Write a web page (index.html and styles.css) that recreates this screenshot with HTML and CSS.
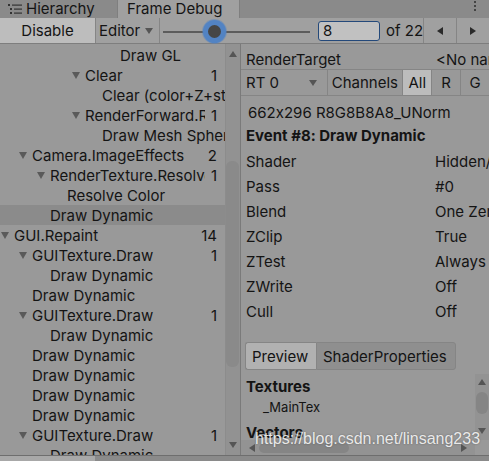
FILE: index.html
```html
<!DOCTYPE html>
<html>
<head>
<meta charset="utf-8">
<link rel="stylesheet" href="styles.css">
</head>
<body>
<div class="win">
  <div class="tabs">
    <div class="tab">
      <svg class="hicon" width="14" height="12" viewBox="0 0 14 12">
        <rect x="0" y="1" width="2" height="2" fill="#333"/>
        <rect x="4" y="1.5" width="10" height="1.2" fill="#333"/>
        <rect x="2" y="5" width="2" height="2" fill="#333"/>
        <rect x="6" y="5.5" width="8" height="1.2" fill="#333"/>
        <rect x="2" y="9" width="2" height="2" fill="#333"/>
        <rect x="6" y="9.5" width="8" height="1.2" fill="#333"/>
      </svg>
      <span>Hierarchy</span>
    </div>
    <div class="tab active">Frame Debug</div>
    <div class="tabfill"><span class="kebab"><i></i><i></i><i></i></span></div>
  </div>
  <div class="toolbar">
    <div class="tbtn disable">Disable</div>
    <div class="tbtn editor">Editor <span class="caret"></span></div>
    <div class="slider"><div class="track"></div><div class="knob"></div></div>
    <div class="field">8</div>
    <div class="of">of 22</div>
    <div class="arrow"><span class="tri-l"></span></div>
    <div class="arrow"><span class="tri-r"></span></div>
  </div>
  <div class="main">
    <div class="left">
      <div class="tree">
        <div class="row d6"><span class="sp"></span><span class="name">Draw GL</span></div>
        <div class="row d4"><span class="sp"><i class="tri"></i></span><span class="name">Clear</span><span class="cnt">1</span></div>
        <div class="row d5"><span class="sp"></span><span class="name">Clear (color+Z+stencil)</span></div>
        <div class="row d4"><span class="sp"><i class="tri"></i></span><span class="name">RenderForward.RenderLoopJob</span><span class="cnt">1</span></div>
        <div class="row d5"><span class="sp"></span><span class="name">Draw Mesh Sphere</span></div>
        <div class="row d1"><span class="sp"><i class="tri"></i></span><span class="name">Camera.ImageEffects</span><span class="cnt">2</span></div>
        <div class="row d2"><span class="sp"><i class="tri"></i></span><span class="name">RenderTexture.ResolveAA</span><span class="cnt">1</span></div>
        <div class="row d3"><span class="sp"></span><span class="name">Resolve Color</span></div>
        <div class="row d2 sel"><span class="sp"></span><span class="name">Draw Dynamic</span></div>
        <div class="row d0"><span class="sp"><i class="tri"></i></span><span class="name">GUI.Repaint</span><span class="cnt">14</span></div>
        <div class="row d1"><span class="sp"><i class="tri"></i></span><span class="name">GUITexture.Draw</span><span class="cnt">1</span></div>
        <div class="row d2"><span class="sp"></span><span class="name">Draw Dynamic</span></div>
        <div class="row d1"><span class="sp"></span><span class="name">Draw Dynamic</span></div>
        <div class="row d1"><span class="sp"><i class="tri"></i></span><span class="name">GUITexture.Draw</span><span class="cnt">1</span></div>
        <div class="row d2"><span class="sp"></span><span class="name">Draw Dynamic</span></div>
        <div class="row d1"><span class="sp"></span><span class="name">Draw Dynamic</span></div>
        <div class="row d1"><span class="sp"></span><span class="name">Draw Dynamic</span></div>
        <div class="row d1"><span class="sp"></span><span class="name">Draw Dynamic</span></div>
        <div class="row d1"><span class="sp"></span><span class="name">Draw Dynamic</span></div>
        <div class="row d1"><span class="sp"><i class="tri"></i></span><span class="name">GUITexture.Draw</span><span class="cnt">1</span></div>
        <div class="row d2"><span class="sp"></span><span class="name">Draw Dynamic</span></div>
      </div>
      <div class="vscroll">
        <span class="up"></span>
        <div class="vtrack"><div class="vthumb"></div></div>
        <span class="down"></span>
      </div>
    </div>
    <div class="right">
      <div class="rt-row"><span>RenderTarget</span><span class="rt-val">&lt;No name&gt;</span></div>
      <div class="chan-row">
        <div class="rtdrop">RT 0 <span class="caret"></span></div>
        <div class="chan">Channels</div>
        <div class="cbtn on">All</div>
        <div class="cbtn">R</div>
        <div class="cbtn">G</div>
      </div>
      <div class="fmt">662x296 R8G8B8A8_UNorm</div>
      <div class="event">Event #8: Draw Dynamic</div>
      <div class="props">
        <div class="prop"><span class="pk">Shader</span><span class="pv">Hidden/Internal-GUITexture</span></div>
        <div class="prop"><span class="pk">Pass</span><span class="pv">#0</span></div>
        <div class="prop"><span class="pk">Blend</span><span class="pv">One Zero</span></div>
        <div class="prop"><span class="pk">ZClip</span><span class="pv">True</span></div>
        <div class="prop"><span class="pk">ZTest</span><span class="pv">Always</span></div>
        <div class="prop"><span class="pk">ZWrite</span><span class="pv">Off</span></div>
        <div class="prop"><span class="pk">Cull</span><span class="pv">Off</span></div>
      </div>
      <div class="ptabs">
        <div class="ptab on">Preview</div>
        <div class="ptab">ShaderProperties</div>
      </div>
      <div class="sp-area">
        <div class="sp-content">
          <div class="sec">Textures</div>
          <div class="item">_MainTex</div>
          <div class="sec">Vectors</div>
        </div>
        <div class="rscroll">
          <span class="up"></span>
          <div class="rtrack"><div class="rthumb"></div></div>
          <span class="down"></span>
        </div>
      </div>
      <div class="hscroll">
        <span class="left-a"></span>
        <div class="htrack"><div class="hthumb"></div></div>
        <span class="right-a"></span>
        <span class="corner"></span>
      </div>
      <div class="watermark">https://blog.csdn.net/linsang233</div>
    </div>
  </div>
  <div class="bottom"><div class="bl"></div></div>
</div>
</body>
</html>
```

FILE: styles.css
```css
* { box-sizing: border-box; }
html, body { margin: 0; padding: 0; }
body {
  width: 489px;
  height: 461px;
  overflow: hidden;
  background: #999999;
  font-family: Inter, "Noto Sans", sans-serif;
  font-size: 15px;
  font-feature-settings: "calt" 0;
  color: #141414;
}
.win { width: 489px; height: 461px; display: flex; flex-direction: column; overflow: hidden; }

/* tabs */
.tabs { height: 18px; display: flex; background: #8a8a8a; flex: none; }
.tab { display: flex; align-items: center; gap: 4px; padding: 0 0 0 8px; width: 117px; height: 18px; line-height: 18px; white-space: nowrap; }
.tab.active { background: #a0a0a0; width: 123px; padding-left: 9px; border-left: 1px solid #7f7f7f; border-right: 1px solid #7f7f7f; }
.hicon { flex: none; }
.tabfill { flex: 1; position: relative; }
.kebab { position: absolute; right: 13px; top: 1px; display: flex; flex-direction: column; gap: 2px; }
.kebab i { display: block; width: 2px; height: 2px; background: #444; }

/* toolbar */
.toolbar { height: 26px; display: flex; align-items: stretch; background: #a0a0a0; border-bottom: 1px solid #7e7e7e; flex: none; white-space: nowrap; }
.tbtn { display: flex; align-items: center; border-right: 1px solid #858585; }
.disable { width: 96px; justify-content: center; background: #bdbdbd; }
.editor { width: 64px; padding-left: 3px; gap: 5px; }
.caret { display: inline-block; width: 0; height: 0; border-left: 4.5px solid transparent; border-right: 4.5px solid transparent; border-top: 6px solid #555; }
.slider { width: 150px; position: relative; }
.track { position: absolute; left: 3px; right: 0; top: 13px; height: 2px; background: #5c5c5c; }
.knob { position: absolute; left: 43px; top: 2px; width: 23px; height: 23px; border-radius: 50%; background: #464646; border: 5px solid #5283c3; box-shadow: 0 0 0 1px rgba(82,131,195,0.45); }
.field { margin: 3px 0 3px 8px; width: 62px; height: 20px; border: 1px solid #24497a; border-radius: 3px; background: #c1c1c1; padding-left: 4px; line-height: 18px; }
.of { width: 44px; display: flex; align-items: center; padding-left: 6px; border-right: 1px solid #858585; }
.arrow { width: 33px; display: flex; align-items: center; justify-content: center; border-right: 1px solid #858585; }
.arrow:last-child { border-right: none; width: 32px; }
.tri-l { width: 0; height: 0; border-top: 4.5px solid transparent; border-bottom: 4.5px solid transparent; border-right: 6px solid #2a2a2a; }
.tri-r { width: 0; height: 0; border-top: 4.5px solid transparent; border-bottom: 4.5px solid transparent; border-left: 6px solid #2a2a2a; }

/* main */
.main { flex: 1; display: flex; min-height: 0; }
.left { width: 241px; display: flex; border-right: 1px solid #7a7a7a; flex: none; }
.tree { width: 225px; overflow: hidden; padding-top: 1px; }
.row { height: 20px; display: flex; align-items: center; white-space: nowrap; }
.row.sel { background: #8b8b8b; }
.sp { width: 14px; flex: none; display: flex; align-items: center; }
.tri { display: block; margin-left: 1px; width: 0; height: 0; border-left: 4.5px solid transparent; border-right: 4.5px solid transparent; border-top: 7px solid #5a5a5a; }
.name { flex: 1; overflow: hidden; min-width: 0; }
.cnt { width: 12px; flex: none; text-align: right; margin-right: 8px; direction: rtl; overflow: visible; }
.d0 { padding-left: 0; }
.d1 { padding-left: 18px; }
.d2 { padding-left: 36px; }
.d3 { padding-left: 53px; }
.d4 { padding-left: 71px; }
.d5 { padding-left: 88px; }
.d6 { padding-left: 106px; }

.vscroll { width: 15px; background: #929292; display: flex; flex-direction: column; align-items: center; border-left: 1px solid #8c8c8c; }
.up { flex: none; margin-top: 7px; width: 0; height: 0; border-left: 4.5px solid transparent; border-right: 4.5px solid transparent; border-bottom: 6px solid #555; }
.down { flex: none; margin-bottom: 7px; width: 0; height: 0; border-left: 4.5px solid transparent; border-right: 4.5px solid transparent; border-top: 6px solid #555; }
.vtrack { flex: 1; width: 100%; padding: 104px 1px 0 0; }
.vthumb { height: 206px; background: #8a8a8a; border-radius: 6px; }

/* right */
.right { flex: 1; position: relative; display: flex; flex-direction: column; min-width: 0; overflow: hidden; }
.rt-row { height: 26px; padding: 6px 0 0 5px; display: flex; border-bottom: 1px solid #858585; white-space: nowrap; }
.rt-val { margin-left: auto; width: 53px; overflow: hidden; }
.chan-row { height: 26px; display: flex; border-bottom: 1px solid #858585; white-space: nowrap; }
.rtdrop { width: 87px; display: flex; align-items: center; justify-content: space-between; padding: 0 10px 0 5px; border-right: 1px solid #858585; }
.chan { width: 75px; display: flex; align-items: center; padding-left: 4px; }
.cbtn { width: 29px; display: flex; align-items: center; justify-content: center; border-left: 1px solid #858585; }
.cbtn.on { background: #bcbcbc; }
.fmt { padding: 7px 0 0 7px; height: 30px; line-height: 20px; white-space: nowrap; }
.event { padding-left: 5px; font-weight: 700; height: 23px; line-height: 20px; white-space: nowrap; }
.props { display: flex; flex-direction: column; }
.prop { height: 25px; display: flex; align-items: center; padding-left: 5px; white-space: nowrap; }
.pk { width: 189px; flex: none; }
.pv { overflow: hidden; }
.ptabs { display: flex; margin: 18px 0 0 4px; height: 28px; flex: none; }
.ptab { display: flex; align-items: center; padding: 0 6px; border: 1px solid #858585; background: #8f8f8f; border-radius: 0 3px 3px 0; }
.ptab.on { background: #b1b1b1; border-radius: 3px 0 0 3px; border-right: none; width: 71px; }
.ptab:not(.on) { width: 140px; }
.sp-area { display: flex; flex: 1; min-height: 0; margin-top: 4px; overflow: hidden; }
.sp-content { flex: 1; padding: 3px 0 0 5px; white-space: nowrap; }
.sec { font-weight: 700; height: 20px; line-height: 20px; }
.item { font-size: 13px; padding-left: 17px; height: 26px; line-height: 20px; }
.rscroll { width: 14px; display: flex; flex-direction: column; align-items: center; background: #939393; }
.rscroll .up { margin-top: 5px; }
.rscroll .down { margin-bottom: 6px; }
.rtrack { flex: 1; width: 100%; padding: 7px 1px 6px 1px; }
.rthumb { height: 22px; background: #858585; border-radius: 6px; }
.hscroll { height: 15px; flex: none; display: flex; align-items: center; background: #939393; }
.left-a { margin-left: 8px; width: 0; height: 0; border-top: 4.5px solid transparent; border-bottom: 4.5px solid transparent; border-right: 6px solid #555; }
.right-a { margin-right: 8px; width: 0; height: 0; border-top: 4.5px solid transparent; border-bottom: 4.5px solid transparent; border-left: 6px solid #555; }
.corner { width: 14px; height: 15px; background: #999; }
.htrack { flex: 1; padding: 0 6px 0 4px; }
.hthumb { width: 90px; height: 10px; background: #858585; border-radius: 6px; }
.watermark { position: absolute; left: 14px; top: 386px; font-family: "Liberation Sans", sans-serif; font-size: 16px; color: rgba(255,255,255,0.85); text-shadow: 0 0 2px rgba(0,0,0,0.35); white-space: nowrap; }
.bottom { height: 6px; flex: none; background: #8a8a8a; border-top: 1px solid #6e6e6e; }
.bl { width: 95px; height: 100%; background: #a8a8a8; }
```
